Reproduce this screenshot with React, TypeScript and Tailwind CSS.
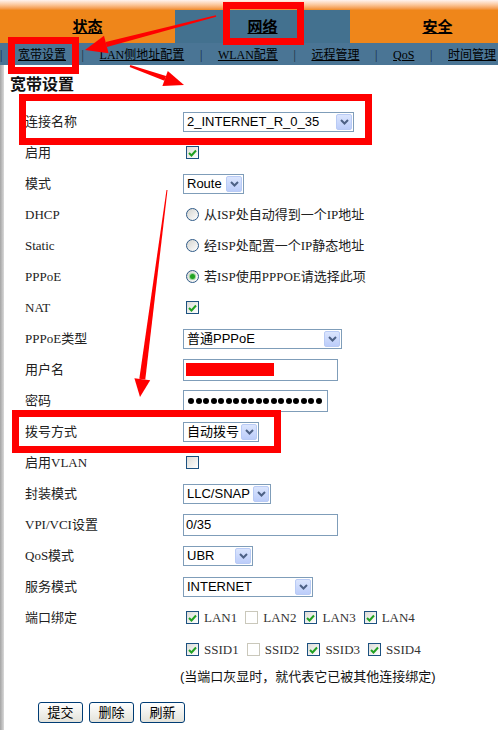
import React from "react";

const serif = "font-['Liberation_Serif','Noto_Sans_CJK_SC',serif]";
const sans = "font-['Liberation_Sans','Noto_Sans_CJK_SC',sans-serif]";

const Chevron = () => (
  <span className="mr-[1px] flex h-[16px] w-[16px] shrink-0 items-center justify-center rounded-[2px] border border-[#b9cbf5] bg-linear-to-b from-[#dbe5fd] to-[#bccdfa]">
    <svg width="9" height="6" viewBox="0 0 9 6">
      <path d="M1 1 L4.5 4.5 L8 1" stroke="#4d6185" strokeWidth="2" fill="none" />
    </svg>
  </span>
);

const Select = ({ value, w }: { value: string; w: string }) => (
  <div className={`flex h-[20px] items-center border border-[#7f9db9] bg-white ${w}`}>
    <span className={`flex-1 overflow-hidden whitespace-nowrap pl-[3px] text-[13px] leading-[17px] text-black ${sans}`}>{value}</span>
    <Chevron />
  </div>
);

const TextBox = ({ w, children }: { w: string; children?: React.ReactNode }) => (
  <div className={`flex h-[22px] items-center border border-[#7f9db9] bg-white pl-[2px] text-[13px] text-black ${sans} ${w}`}>
    {children}
  </div>
);

const CheckBox = ({ checked, disabled }: { checked?: boolean; disabled?: boolean }) => (
  <span
    className={`ml-[3px] mr-[5px] flex h-[13px] w-[13px] shrink-0 items-center justify-center border ${
      disabled ? "border-[#cac8bb] bg-white" : "border-[#1c5180] bg-linear-to-br from-[#dcdcd7] to-white"
    }`}
  >
    {checked && (
      <svg width="9" height="8" viewBox="0 0 9 8">
        <path d="M1 4 L3.5 6.5 L8 1.5" stroke="#21a121" strokeWidth="2" fill="none" />
      </svg>
    )}
  </span>
);

const Radio = ({ checked, text }: { checked?: boolean; text: string }) => (
  <div className="flex items-center">
    <span className="ml-[3px] mr-[5px] flex h-[13px] w-[13px] items-center justify-center rounded-full border border-[#2f5a87] bg-linear-to-br from-[#d4d4cf] to-white">
      {checked && <span className="h-[5px] w-[5px] rounded-full bg-[#21a121] ring-1 ring-[#9ad69a]" />}
    </span>
    <span className={`text-[13px] text-[#222] ${serif}`}>{text}</span>
  </div>
);

const Row = ({ label, children, h = "h-[31px]" }: { label?: string; children?: React.ReactNode; h?: string }) => (
  <div className={`flex items-center ${h}`}>
    <div className={`w-[158px] shrink-0 text-[13px] text-[#222] ${serif}`}>{label}</div>
    <div className="flex items-center">{children}</div>
  </div>
);

const Port = ({ name, checked = true, disabled }: { name: string; checked?: boolean; disabled?: boolean }) => (
  <div className="mr-[5px] flex items-center">
    <CheckBox checked={checked} disabled={disabled} />
    <span className={`text-[13px] text-[#333] ${serif}`}>{name}</span>
  </div>
);

const Overlay = () => (
  <>
    <div className="pointer-events-none absolute left-[223px] top-[2px] h-[43px] w-[81px] border-[7px] border-[#ff0000]" />
    <div className="pointer-events-none absolute left-[8px] top-[37px] h-[37px] w-[71px] border-[7px] border-[#ff0000]" />
    <div className="pointer-events-none absolute left-[19px] top-[94px] h-[51px] w-[353px] border-[7px] border-[#ff0000]" />
    <div className="pointer-events-none absolute left-[12px] top-[410px] h-[43px] w-[269px] border-[7px] border-[#ff0000]" />
    <svg className="pointer-events-none absolute left-0 top-0" width="498" height="730">
      <polygon points="216.2,16.8 215.8,15.2 105.7,42.1 106.9,46.9" fill="#ff0000" />
      <polygon points="85,50 104,35.8 108.6,53.2" fill="#ff0000" />
      <polygon points="129.7,66.9 130.3,65.1 166.1,76.0 164.4,80.7" fill="#ff0000" />
      <polygon points="184,85 167.8,70.9 162.4,86" fill="#ff0000" />
      <polygon points="166.5,190 167.5,190 145.3,379.6 139.3,378.8" fill="#ff0000" />
      <polygon points="140,397 134.4,378.2 150.2,380.2" fill="#ff0000" />
    </svg>
  </>
);

export default function App() {
  const subnav = ["宽带设置", "LAN侧地址配置", "WLAN配置", "远程管理", "QoS", "时间管理"];
  return (
    <div className="relative h-[730px] w-[498px] overflow-hidden bg-white">
      <div className="h-[10px] bg-linear-to-b from-[#fff3f0] via-[#fbc598] to-[#f08a22]" />
      <div className="flex h-[33px]">
        {[
          ["状态", "bg-[#ef861a]"],
          ["网络", "bg-[#43718f]"],
          ["安全", "bg-[#ef861a]"],
        ].map(([t, c]) => (
          <div key={t} className={`flex w-[175px] shrink-0 items-center justify-center ${c}`}>
            <span className="font-['Noto_Sans_CJK_SC',sans-serif] text-[15px] font-bold text-black underline">{t}</span>
          </div>
        ))}
      </div>
      <div className={`flex h-[22px] items-center gap-[15.6px] whitespace-nowrap bg-[#4a7595] pt-[1px] text-[12px] ${serif}`}>
        {subnav.map((s) => (
          <React.Fragment key={s}>
            <span className="text-[#14243c]">|</span>
            <span className="text-black underline">{s}</span>
          </React.Fragment>
        ))}
      </div>
      <div className="flex h-[665px]">
        <div className="w-[4px] shrink-0 bg-linear-to-r from-[#a4a4a4] to-[#dadada]" />
        <div className="flex-1 pl-[6px] pt-[8px]">
          <h1 className="h-[20px] font-['Noto_Sans_CJK_SC',sans-serif] text-[16px] font-bold leading-[20px] text-[#111]">宽带设置</h1>
          <div className="mt-[13px] pl-[15px]">
            <Row label="连接名称">
              <Select value="2_INTERNET_R_0_35" w="w-[171px]" />
            </Row>
            <Row label="启用">
              <CheckBox checked />
            </Row>
            <Row label="模式">
              <Select value="Route" w="w-[61px]" />
            </Row>
            <Row label="DHCP">
              <Radio text="从ISP处自动得到一个IP地址" />
            </Row>
            <Row label="Static">
              <Radio text="经ISP处配置一个IP静态地址" />
            </Row>
            <Row label="PPPoE">
              <Radio checked text="若ISP使用PPPOE请选择此项" />
            </Row>
            <Row label="NAT">
              <CheckBox checked />
            </Row>
            <Row label="PPPoE类型">
              <Select value="普通PPPoE" w="w-[159px]" />
            </Row>
            <Row label="用户名">
              <TextBox w="w-[155px]">
                <span className="h-[13px] w-[88px] bg-[#ff0000]" />
              </TextBox>
            </Row>
            <Row label="密码">
              <TextBox w="w-[145px]">
                <div className="flex gap-[1.5px] pl-[2px]">
                  {Array.from({ length: 18 }).map((_, i) => (
                    <span key={i} className="h-[6px] w-[6px] rounded-full bg-black" />
                  ))}
                </div>
              </TextBox>
            </Row>
            <Row label="拨号方式">
              <Select value="自动拨号" w="w-[76px]" />
            </Row>
            <Row label="启用VLAN">
              <CheckBox />
            </Row>
            <Row label="封装模式">
              <Select value="LLC/SNAP" w="w-[88px]" />
            </Row>
            <Row label="VPI/VCI设置">
              <TextBox w="w-[155px]">0/35</TextBox>
            </Row>
            <Row label="QoS模式">
              <Select value="UBR" w="w-[70px]" />
            </Row>
            <Row label="服务模式">
              <Select value="INTERNET" w="w-[130px]" />
            </Row>
            <Row label="端口绑定">
              <Port name="LAN1" />
              <Port name="LAN2" checked={false} disabled />
              <Port name="LAN3" />
              <Port name="LAN4" />
            </Row>
            <Row h="h-[33px]">
              <Port name="SSID1" />
              <Port name="SSID2" checked={false} disabled />
              <Port name="SSID3" />
              <Port name="SSID4" />
            </Row>
            <div className={`ml-[155px] h-[22px] text-[13px] leading-[22px] text-[#111] ${sans}`}>
              (当端口灰显时，就代表它已被其他连接绑定)
            </div>
          </div>
          <div className="ml-[28px] mt-[14px] flex gap-[6px]">
            {["提交", "删除", "刷新"].map((b) => (
              <button
                key={b}
                className={`h-[21px] w-[45px] rounded-[3px] border border-[#003c74] bg-linear-to-b from-white to-[#e3e2da] text-[13px] leading-none text-black ${sans}`}
              >
                {b}
              </button>
            ))}
          </div>
        </div>
      </div>
      <Overlay />
    </div>
  );
}
